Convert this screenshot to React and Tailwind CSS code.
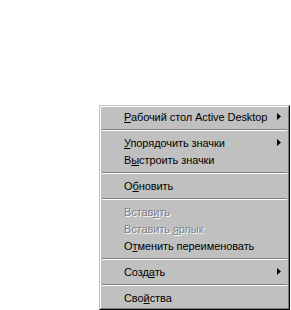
import React from "react";

const items = [
  { label: "Рабочий стол Active Desktop", key: 0, arrow: true },
  { sep: true },
  { label: "Упорядочить значки", key: 0, arrow: true },
  { label: "Выстроить значки", key: 1 },
  { sep: true },
  { label: "Обновить", key: 1 },
  { sep: true },
  { label: "Вставить", key: 5, disabled: true },
  { label: "Вставить ярлык", key: 9, disabled: true },
  { label: "Отменить переименовать", key: 1 },
  { sep: true },
  { label: "Создать", key: 4, arrow: true },
  { sep: true },
  { label: "Свойства", key: 3 },
];

const Label = ({ text, k }) => (
  <span className="pt-[2px] tracking-[-0.08px]">
    {text.slice(0, k)}
    <span className="underline underline-offset-[1px]">{text[k]}</span>
    {text.slice(k + 1)}
  </span>
);

const Arrow = () => (
  <svg width="4" height="7" viewBox="0 0 4 7" className="ml-auto mr-[6px]">
    <path d="M0 0 L4 3.5 L0 7 Z" fill="#000" />
  </svg>
);

const App = () => {
  return (
    <div className="w-[291px] h-[310px] bg-white relative">
      <div className="absolute left-[99px] top-[105px] w-[191px] border border-t-[#c0c0c0] border-l-[#c0c0c0] border-r-black border-b-black">
        <div className="border border-t-white border-l-white border-r-[#808080] border-b-[#808080] bg-[#c0c0c0] px-[1px] pt-[1px] pb-[2px]">
          {items.map((it, i) =>
            it.sep ? (
              <div key={i} className="h-[9px] flex flex-col justify-center">
                <div className="h-px bg-[#808080]" />
                <div className="h-px bg-white" />
              </div>
            ) : (
              <div
                key={i}
                className={
                  "h-[17px] flex items-center pl-[22px] text-[11px] leading-none font-['Liberation_Sans',Arial,sans-serif] " +
                  (it.disabled
                    ? "text-[#808080] [text-shadow:1px_1px_0_#fff]"
                    : "text-black")
                }
              >
                <Label text={it.label} k={it.key} />
                {it.arrow && <Arrow />}
              </div>
            )
          )}
        </div>
      </div>
    </div>
  );
};

export default App;
